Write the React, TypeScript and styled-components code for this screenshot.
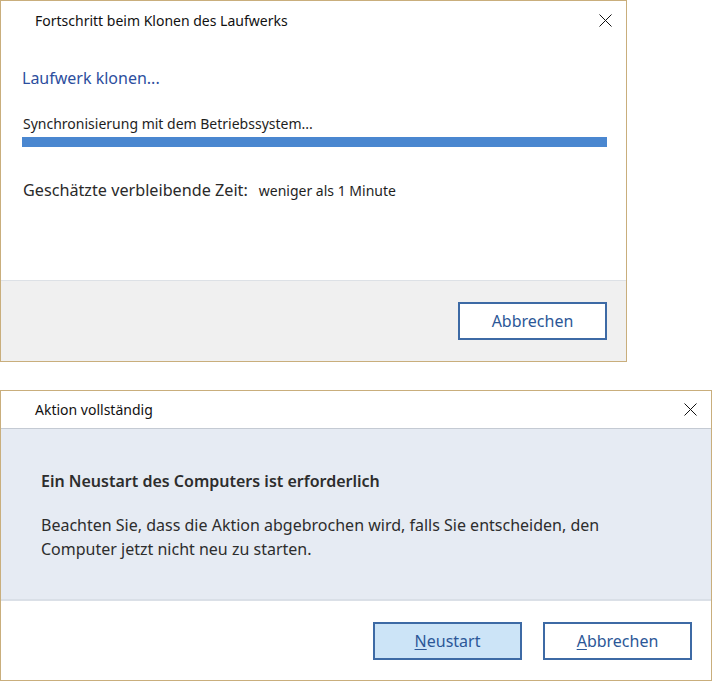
import styled, { createGlobalStyle } from "styled-components";

const GlobalStyle = createGlobalStyle`
  html, body {
    margin: 0;
    padding: 0;
    background: #ffffff;
  }
  body {
    font-family: "Noto Sans", "Open Sans", sans-serif;
    color: #1e1e1e;
  }
`;

const Page = styled.div`
  width: 712px;
  height: 682px;
  display: flex;
  flex-direction: column;
  gap: 28px;
`;

const Dialog = styled.div<{ $width: number; $height: number }>`
  box-sizing: border-box;
  width: ${(p) => p.$width}px;
  height: ${(p) => p.$height}px;
  border: 1px solid #c9ae7c;
  background: #ffffff;
  display: flex;
  flex-direction: column;
`;

const TitleBar = styled.div<{ $divider?: boolean }>`
  height: ${(p) => (p.$divider ? 37 : 38)}px;
  flex-shrink: 0;
  display: flex;
  align-items: center;
  justify-content: space-between;
  padding: 0 14px 0 34px;
  font-size: 14px;
  color: #111;
  border-bottom: ${(p) => (p.$divider ? "1px solid #c4cad3" : "none")};
`;

const CloseButton = styled.button`
  width: 14px;
  height: 14px;
  padding: 0;
  border: none;
  background: none;
  display: flex;
  align-items: center;
  justify-content: center;
`;

const ProgressBody = styled.div`
  flex: 1;
  padding: 27px 19px 0 21px;
`;

const Heading = styled.div`
  font-size: 16px;
  line-height: 24px;
  color: #2c4e9e;
  margin-bottom: 24px;
`;

const StatusText = styled.div`
  font-size: 14px;
  line-height: 19px;
  padding-left: 1px;
  color: #1e1e1e;
`;

const ProgressTrack = styled.div`
  margin-top: 4px;
  height: 10px;
  background: #e6e6e6;
`;

const ProgressFill = styled.div`
  height: 100%;
  background: #4a87d0;
`;

const TimeRow = styled.div`
  margin-top: 32px;
  padding-left: 1px;
  display: flex;
  align-items: baseline;
  gap: 11px;
`;

const TimeLabel = styled.span`
  font-size: 16.2px;
  color: #2a2a2a;
`;

const TimeValue = styled.span`
  font-size: 14px;
  color: #1e1e1e;
`;

const Footer = styled.div<{ $grey?: boolean }>`
  height: ${(p) => (p.$grey ? 81 : 80)}px;
  flex-shrink: 0;
  box-sizing: border-box;
  background: ${(p) => (p.$grey ? "#f0f0f0" : "#ffffff")};
  border-top: 1px solid ${(p) => (p.$grey ? "#dde1e6" : "#dbe0e7")};
  display: flex;
  justify-content: flex-end;
  align-items: flex-start;
  gap: 21px;
  padding: 21px 19px 0 0;
`;

const DialogButton = styled.button<{ $primary?: boolean }>`
  box-sizing: border-box;
  width: 149px;
  height: 38px;
  border: 2px solid #3d6aa5;
  background: ${(p) => (p.$primary ? "#cce4f7" : "#ffffff")};
  color: #2b5797;
  font-family: "Noto Sans", "Open Sans", sans-serif;
  font-size: 16px;
  padding: 0;
  cursor: default;

  u {
    text-underline-offset: 2px;
  }
`;

const MessageBody = styled.div`
  flex: 1;
  background: #e6ebf3;
  padding: 40px 20px 0 40px;
  border-bottom: 1px solid #d9dfe7;
`;

const MessageTitle = styled.div`
  font-size: 16px;
  font-weight: 600;
  line-height: 24px;
  color: #2d2d2d;
  margin-bottom: 20px;
`;

const MessageText = styled.div`
  font-size: 16px;
  line-height: 24px;
  color: #2d2d2d;
`;

function CloseIcon() {
  return (
    <svg width="13" height="13" viewBox="0 0 13 13">
      <path d="M0.5 0.5 L12.5 12.5 M12.5 0.5 L0.5 12.5" stroke="#111" strokeWidth="1" />
    </svg>
  );
}

function App() {
  return (
    <>
      <GlobalStyle />
      <Page>
        <Dialog $width={627} $height={362}>
          <TitleBar>
            <span>Fortschritt beim Klonen des Laufwerks</span>
            <CloseButton>
              <CloseIcon />
            </CloseButton>
          </TitleBar>
          <ProgressBody>
            <Heading>Laufwerk klonen...</Heading>
            <StatusText>Synchronisierung mit dem Betriebssystem...</StatusText>
            <ProgressTrack>
              <ProgressFill style={{ width: "100%" }} />
            </ProgressTrack>
            <TimeRow>
              <TimeLabel>Geschätzte verbleibende Zeit:</TimeLabel>
              <TimeValue>weniger als 1 Minute</TimeValue>
            </TimeRow>
          </ProgressBody>
          <Footer $grey>
            <DialogButton>Abbrechen</DialogButton>
          </Footer>
        </Dialog>

        <Dialog $width={712} $height={291}>
          <TitleBar $divider>
            <span>Aktion vollständig</span>
            <CloseButton>
              <CloseIcon />
            </CloseButton>
          </TitleBar>
          <MessageBody>
            <MessageTitle>Ein Neustart des Computers ist erforderlich</MessageTitle>
            <MessageText>
              Beachten Sie, dass die Aktion abgebrochen wird, falls Sie entscheiden, den
              <br />
              Computer jetzt nicht neu zu starten.
            </MessageText>
          </MessageBody>
          <Footer>
            <DialogButton $primary>
              <u>N</u>eustart
            </DialogButton>
            <DialogButton>
              <u>A</u>bbrechen
            </DialogButton>
          </Footer>
        </Dialog>
      </Page>
    </>
  );
}

export default App;
